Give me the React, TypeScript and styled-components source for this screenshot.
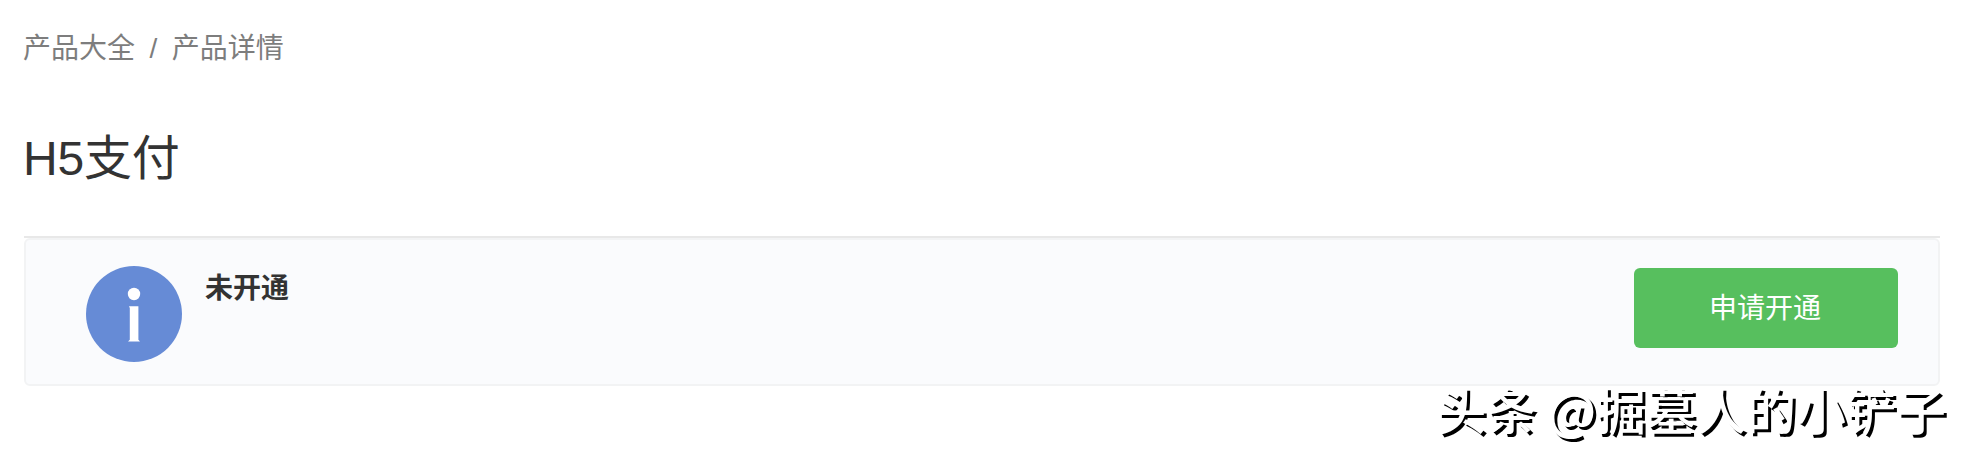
import React from 'react'
import styled, { createGlobalStyle } from 'styled-components'

const GlobalStyle = createGlobalStyle`
  * {
    box-sizing: border-box;
  }
  body {
    margin: 0;
    background: #fff;
    color: #333;
    font-family: "Liberation Sans", "Noto Sans CJK SC", sans-serif;
    font-size: 28px;
  }
`

const Page = styled.main`
  position: relative;
  height: 456px;
  padding: 29px 24px 0;
  overflow: hidden;
`

const Breadcrumb = styled.nav`
  display: flex;
  gap: 14.5px;
  height: 40px;
  margin-left: -1px;
  line-height: 40px;
  color: #7d7d7d;
`

const Title = styled.h1`
  height: 72px;
  margin: 54px 0 41px -1px;
  font-size: 48px;
  font-weight: 400;
  line-height: 72px;
  letter-spacing: -0.2px;
`

const Section = styled.section`
  border-top: 2px solid #e8e8e8;
`

const StatusCard = styled.div`
  display: flex;
  align-items: flex-start;
  height: 148px;
  padding: 26px 40px 0 60px;
  border: 2px solid #f2f3f4;
  border-radius: 6px;
  background: #fafbfd;
`

const InfoIcon = styled.svg`
  flex: none;
  width: 96px;
  height: 96px;
`

const StatusText = styled.strong`
  flex: 1;
  padding-left: 23px;
  margin-top: 3px;
  line-height: 40px;
`

const ApplyButton = styled.button`
  width: 264px;
  height: 80px;
  margin-top: 2px;
  padding: 1px 2px 0 0;
  border: 0;
  border-radius: 6px;
  background: #57bf5e;
  color: #fff;
  font: inherit;
  line-height: 79px;
`

// sits over the lower edge of the card
const Watermark = styled.div`
  position: absolute;
  right: 18px;
  bottom: 13px;
  color: #fff;
  font-family: "Noto Sans CJK SC", sans-serif;
  font-size: 50px;
  font-weight: 500;
  line-height: 70px;
  white-space: nowrap;
  text-shadow: 3px 3px 0 #000;
`

export default function App() {
  return (
    <>
      <GlobalStyle />
      <Page>
        <Breadcrumb>
          <span>产品大全</span>
          <span>/</span>
          <span>产品详情</span>
        </Breadcrumb>
        <Title>H5支付</Title>
        <Section>
          <StatusCard>
            <InfoIcon viewBox="0 0 96 96" aria-hidden="true">
              <circle cx="48" cy="48" r="48" fill="#668bd6" />
              <circle cx="48" cy="28" r="6.2" fill="#fff" />
              <path d="M43 40.3h9.4v33.400l1.600 1.800H42l1.800-1.800V42z" fill="#fff" />
            </InfoIcon>
            <StatusText>未开通</StatusText>
            <ApplyButton type="button">申请开通</ApplyButton>
          </StatusCard>
        </Section>
        <Watermark>头条 @掘墓人的小铲子</Watermark>
      </Page>
    </>
  )
}
